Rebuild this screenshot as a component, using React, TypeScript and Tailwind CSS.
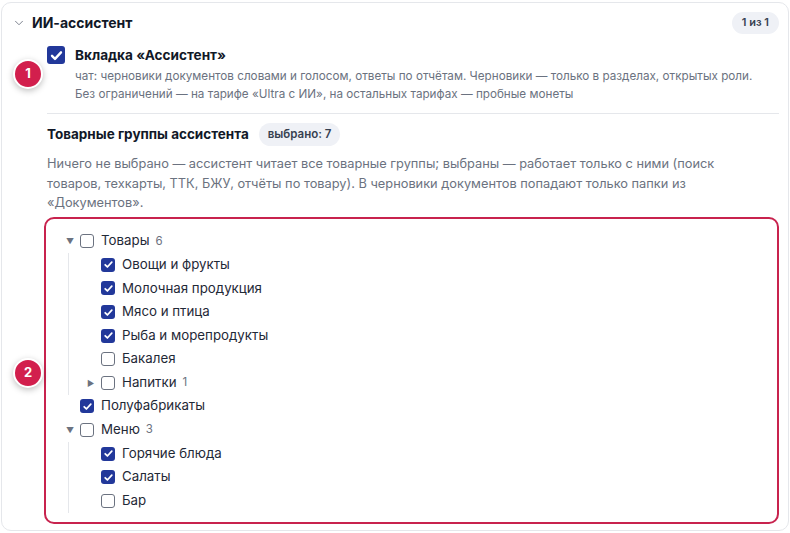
import { ChevronDown } from 'lucide-react';

type Node = {
  label: string;
  checked?: boolean;
  count?: number;
  open?: boolean;
  children?: Node[];
};

const TREE: Node[] = [
  {
    label: 'Товары',
    count: 6,
    open: true,
    children: [
      { label: 'Овощи и фрукты', checked: true },
      { label: 'Молочная продукция', checked: true },
      { label: 'Мясо и птица', checked: true },
      { label: 'Рыба и морепродукты', checked: true },
      { label: 'Бакалея' },
      { label: 'Напитки', count: 1, open: false, children: [] },
    ],
  },
  { label: 'Полуфабрикаты', checked: true },
  {
    label: 'Меню',
    count: 3,
    open: true,
    children: [
      { label: 'Горячие блюда', checked: true },
      { label: 'Салаты', checked: true },
      { label: 'Бар' },
    ],
  },
];

function Box({ checked, size = 14 }: { checked?: boolean; size?: number }) {
  if (checked) {
    return (
      <span
        className="flex items-center justify-center rounded-[3px] bg-[#22389a] shrink-0"
        style={{ width: size, height: size }}
      >
        <svg width={size - 3} height={size - 3} viewBox="0 0 12 12" fill="none">
          <path d="M2.4 6.3l2.4 2.4 4.8-5.2" stroke="white" strokeWidth="1.9" strokeLinecap="round" strokeLinejoin="round" />
        </svg>
      </span>
    );
  }
  return (
    <span
      className="rounded-[3px] border border-[#6b7280] bg-white shrink-0"
      style={{ width: size, height: size }}
    />
  );
}

function TreeRow({ node }: { node: Node }) {
  const hasKids = node.children !== undefined;
  return (
    <div>
      <div className="flex items-center h-[23.6px]">
        <span className="w-[14px] flex items-center justify-start text-[#6b7280] text-[8px]">
          {hasKids ? (node.open ? '▼' : '►') : ''}
        </span>
        <Box checked={node.checked} />
        <span className="ml-[7px] text-[13.3px] text-[#1f2937]">{node.label}</span>
        {node.count !== undefined && (
          <span className="ml-[6px] text-[11.5px] text-[#6b7280]">{node.count}</span>
        )}
      </div>
      {hasKids && node.open && node.children!.length > 0 && (
        <div className="ml-[2px] pl-[18px] border-l border-[#e5e7eb]">
          {node.children!.map((c) => (
            <TreeRow key={c.label} node={c} />
          ))}
        </div>
      )}
    </div>
  );
}

function Marker({ n, className }: { n: number; className: string }) {
  return (
    <div
      className={`absolute w-[30px] h-[30px] rounded-full bg-[#d21f4d] border-2 border-white shadow-[0_2px_6px_rgba(0,0,0,0.25)] flex items-center justify-center text-white text-[13px] font-bold ${className}`}
    >
      {n}
    </div>
  );
}

export default function App() {
  return (
    <div
      className="w-[790px] h-[533px] bg-white pt-[2px] pl-[1px]"
      style={{ fontFamily: 'Inter, "Noto Sans", sans-serif' }}
    >
      <div className="relative w-[788px] h-[529px] border border-[#e5e7eb] rounded-[10px] bg-white">
        {/* Header */}
        <div className="flex items-center h-[39px] pl-[10px] pr-[9px]">
          <ChevronDown className="w-[14px] h-[14px] text-[#6b7280]" strokeWidth={1.5} />
          <span className="ml-[6px] text-[14px] font-bold text-[#111827]">ИИ-ассистент</span>
          <span className="ml-auto px-[10px] h-[22px] flex items-center rounded-full bg-[#eff1f6] text-[11px] font-semibold text-[#374151]">
            1 из 1
          </span>
        </div>

        <div className="pl-[45px] pr-[9px]">
          {/* Main checkbox */}
          <div className="flex items-start pt-[4px]">
            <Box checked size={18} />
            <div className="ml-[10px]">
              <div className="text-[13.6px] font-bold text-[#111827] leading-[18px]">Вкладка «Ассистент»</div>
              <div className="mt-[3px] text-[11.7px] leading-[18px] text-[#6b7280] whitespace-nowrap">
                чат: черновики документов словами и голосом, ответы по отчётам. Черновики — только в разделах, открытых роли.
                <br />
                Без ограничений — на тарифе «Ultra с ИИ», на остальных тарифах — пробные монеты
              </div>
            </div>
          </div>

          <div className="mt-[10px] border-t border-[#e5e7eb]" />

          {/* Groups */}
          <div className="flex items-center mt-[9px]">
            <span className="text-[13.5px] font-bold text-[#111827]">Товарные группы ассистента</span>
            <span className="ml-[10px] px-[9px] h-[23px] flex items-center rounded-full bg-[#eff1f6] text-[11.5px] font-semibold text-[#374151]">
              выбрано: 7
            </span>
          </div>
          <p className="mt-[8px] max-w-[700px] text-[12.8px] leading-[19.5px] text-[#6b7280]">
            Ничего не выбрано — ассистент читает все товарные группы; выбраны — работает только с ними (поиск товаров, техкарты, ТТК, БЖУ, отчёты по товару). В черновики документов попадают только папки из «Документов».
          </p>

          {/* Tree */}
          <div className="mt-[5px] ml-[-2px] mr-[1px] rounded-[9px] outline-[2.5px] outline-solid outline-[#c8234e] -outline-offset-[1px]">
            <div className="border border-[#e5e7eb] rounded-[8px] pl-[20px] pt-[11px] pb-[9px]">
              {TREE.map((n) => (
                <TreeRow key={n.label} node={n} />
              ))}
            </div>
          </div>
        </div>

        <Marker n={1} className="left-[11px] top-[56px]" />
        <Marker n={2} className="left-[11px] top-[355px]" />
      </div>
    </div>
  );
}
